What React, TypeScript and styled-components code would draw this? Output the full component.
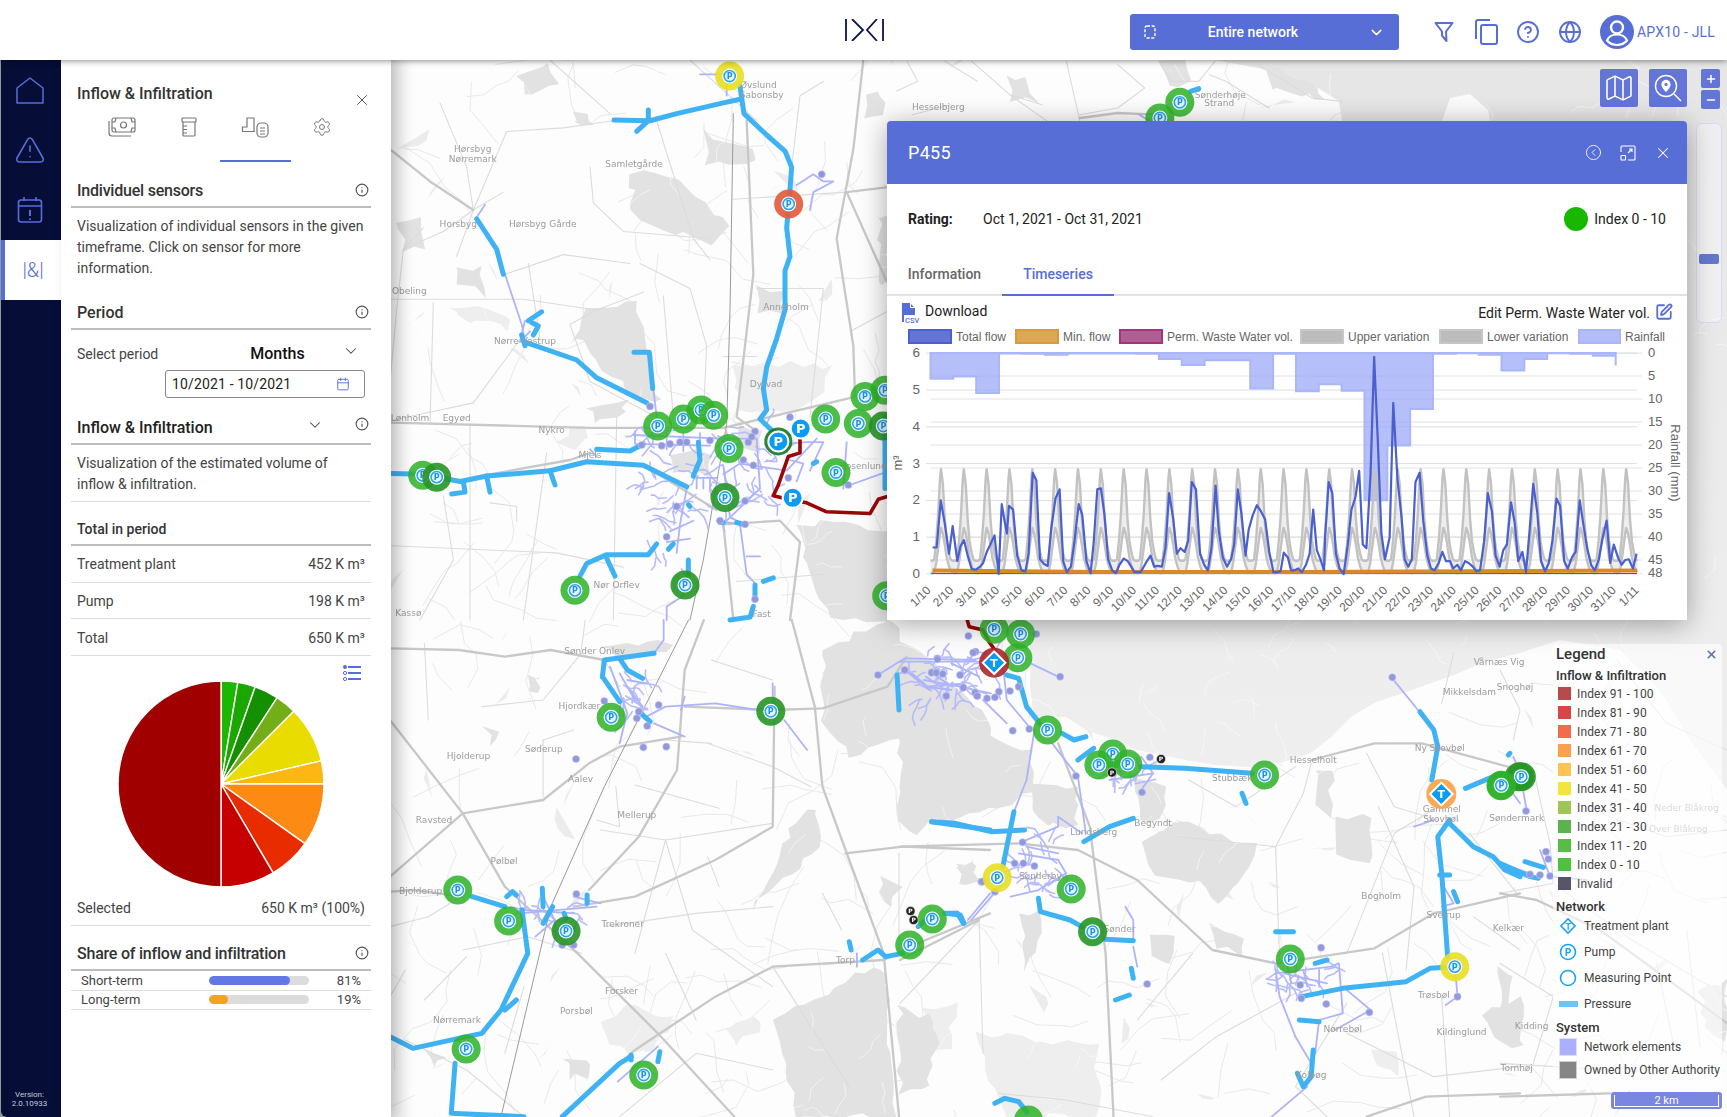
import styled, { createGlobalStyle } from "styled-components";
import {
  X,
  ChevronDown,
  Info,
  Calendar,
  Settings,
  CircleHelp,
  Globe,
  TriangleAlert,
  CircleChevronLeft,
  SquarePen,
  Map as MapIcon,
  Plus,
  Minus,
} from "lucide-react";

const BLUE = "#586ed7";

const GlobalStyle = createGlobalStyle`
  html, body {
    margin: 0;
    padding: 0;
    background: #fff;
    font-family: Roboto, "Liberation Sans", sans-serif;
    overflow: hidden;
  }
  * { box-sizing: border-box; }
`;

const Root = styled.div`
  width: 1727px;
  height: 1117px;
  padding-left: 1px;
  background: #8f9a92;
  display: flex;
  flex-direction: column;
  overflow: hidden;
`;

/* ---------- header ---------- */

const Header = styled.header`
  height: 60px;
  flex: none;
  margin-left: -1px;
  padding-top: 4px;
  background: #fff;
  display: flex;
  align-items: center;
  box-shadow: 0 1px 6px rgba(0, 0, 0, 0.45);
  position: relative;
  z-index: 5;
`;

const Logo = styled.svg`
  width: 40px;
  height: 22px;
  margin-left: 845px;
  margin-top: -5px;
  stroke: #0b1647;
  stroke-width: 1.8;
  fill: none;
`;

const NetworkSelect = styled.div`
  width: 269px;
  height: 36px;
  margin-left: 245px;
  border-radius: 3px;
  background: ${BLUE};
  color: #fff;
  display: flex;
  align-items: center;
  padding: 0 14px;
  font-size: 14px;
  font-weight: 500;
`;

const SelectLabel = styled.span`
  flex: 1;
  text-align: center;
  padding-right: 18px;
`;

const HeaderIcons = styled.div`
  display: flex;
  align-items: center;
  gap: 18px;
  margin-left: 33px;
  color: ${BLUE};
`;

const HeaderIcon = styled.div`
  width: 24px;
  display: flex;
  justify-content: center;
`;

const UserIcon = styled.svg`
  width: 34px;
  height: 34px;
  flex: none;
`;

const UserName = styled.span`
  font-size: 14px;
  color: ${BLUE};
  margin-left: -15px;
  letter-spacing: 0.2px;
`;

/* ---------- body ---------- */

const Body = styled.div`
  flex: 1;
  min-height: 0;
  display: flex;
`;

const Sidebar = styled.nav`
  width: 60px;
  flex: none;
  background: #060e38;
  border-bottom-left-radius: 6px;
  display: flex;
  flex-direction: column;
`;

const NavItem = styled.div<{ $active?: boolean }>`
  height: 60px;
  display: flex;
  align-items: center;
  justify-content: center;
  color: ${BLUE};
  background: ${(p) => (p.$active ? "#fff" : "transparent")};
  border-left: ${(p) => (p.$active ? `4px solid ${BLUE}` : "none")};
  font-size: 20px;
  font-weight: 300;
  padding-right: ${(p) => (p.$active ? "0" : "3px")};
`;

const Version = styled.div`
  margin-top: auto;
  padding-bottom: 9px;
  padding-right: 3px;
  text-align: center;
  font-size: 8px;
  line-height: 9px;
  color: #c4c8d8;
`;

const Panel = styled.aside`
  width: 330px;
  flex: none;
  background: #fff;
  padding: 0 20px 0 10px;
  position: relative;
  z-index: 3;
  box-shadow: 5px 0 12px rgba(0, 0, 0, 0.14);
  color: #444;
`;

const TitleRow = styled.div`
  margin-top: 23px;
  height: 20px;
  padding-left: 6px;
  display: flex;
  justify-content: space-between;
  align-items: center;
  font-size: 16px;
  font-weight: 500;
  color: #333;
`;

const CloseBtn = styled.div`
  display: flex;
  margin: 14px 0 0;
  color: #555;
`;

const PanelTabs = styled.div`
  height: 59px;
  margin-left: 18px;
  display: grid;
  grid-template-columns: repeat(4, 66.5px);
`;

const PanelTab = styled.div<{ $active?: boolean }>`
  display: flex;
  justify-content: center;
  padding-top: 14px;
  color: #777;
  margin: 0 -2px;
  border-bottom: 2px solid ${(p) => (p.$active ? BLUE : "transparent")};
`;

const SectionHead = styled.div<{ $mt: number; $small?: boolean; $dark?: boolean; $tight?: boolean }>`
  height: 33px;
  margin-top: ${(p) => p.$mt}px;
  padding: 0 2px 0 6px;
  border-bottom: 2px solid #bdbdbd;
  display: flex;
  align-items: center;
  font-size: ${(p) => (p.$small ? 14 : 16)}px;
  font-weight: 500;
  letter-spacing: ${(p) => (p.$tight ? "-0.22px" : "0")};
  color: ${(p) => (p.$dark ? "#222" : "#333")};
`;

const HeadText = styled.span`
  flex: 1;
`;

const InfoIcon = styled(Info)`
  width: 14px;
  height: 14px;
  color: #555;
  margin-top: -1px;
`;

const RaisedInfoIcon = styled(InfoIcon)`
  margin-top: -7px;
`;

const HeadChevron = styled(ChevronDown)`
  width: 18px;
  height: 18px;
  color: #444;
  margin: -6px 31px 0 0;
`;

const SelectChevron = styled(ChevronDown)`
  width: 18px;
  height: 18px;
  color: #444;
  margin: -6px 0 0 6px;
`;

const Paragraph = styled.p<{ $rule?: boolean }>`
  margin: 0;
  padding: 8px ${(p) => (p.$rule ? 20 : 0)}px ${(p) => (p.$rule ? 6 : 0)}px 6px;
  font-size: 14px;
  line-height: 21px;
  color: #444;
  border-bottom: ${(p) => (p.$rule ? "1px solid #ddd" : "none")};
`;

const SelectRow = styled.div`
  height: 32px;
  margin-top: 8px;
  padding-left: 6px;
  display: flex;
  align-items: center;
  font-size: 14px;
`;

const SelectValue = styled.span`
  margin: -2px 0 0 92px;
  font-size: 16px;
  font-weight: 500;
  color: #111;
  width: 86px;
`;

const DateField = styled.div`
  width: 200px;
  height: 28px;
  margin-left: 94px;
  padding: 0 14px 0 6px;
  border: 1px solid #888;
  border-radius: 3px;
  display: flex;
  align-items: center;
  justify-content: space-between;
  font-size: 14px;
  color: #222;
  letter-spacing: 0.15px;
`;

const StatRow = styled.div`
  height: 36.7px;
  padding: 1px 6px 0;
  border-bottom: 1px solid #ddd;
  display: flex;
  align-items: center;
  justify-content: space-between;
  font-size: 14px;
`;

const ListRow = styled.div`
  height: 25px;
  padding: 9px 10px 0 0;
  display: flex;
  justify-content: flex-end;
`;

const PieSvg = styled.svg`
  display: block;
  width: 300px;
  height: 206px;
`;

const SelectedRow = styled(StatRow)`
  height: 39px;
  padding-top: 4px;
`;

const ShareRow = styled.div`
  height: 19.5px;
  padding: 0 10px;
  border-bottom: 1px solid #ddd;
  display: grid;
  grid-template-columns: 128px 100px 1fr;
  align-items: center;
  font-size: 13px;
  color: #444;
`;

const ShareTrack = styled.div`
  height: 9px;
  border-radius: 5px;
  background: #dcdcdc;
  overflow: hidden;
`;

const ShareFill = styled.div<{ $color: string }>`
  height: 100%;
  border-radius: 5px;
  background: ${(p) => p.$color};
`;

const SharePct = styled.span`
  text-align: right;
`;

/* ---------- map area ---------- */

const MapArea = styled.main`
  flex: 1;
  position: relative;
  overflow: hidden;
  background: #fff;
`;

const MapSvg = styled.svg`
  position: absolute;
  inset: 0;
  width: 100%;
  height: 100%;
  font-family: "DejaVu Sans", sans-serif;
  filter: blur(0.45px);
`;

const MapTools = styled.div`
  position: absolute;
  top: 9px;
  right: 7px;
  display: flex;
  gap: 11px;
`;

const MapBtn = styled.div`
  width: 38px;
  height: 38px;
  border-radius: 2px;
  background: #6376d8;
  color: #fff;
  display: flex;
  align-items: center;
  justify-content: center;
`;

const ZoomCol = styled.div`
  margin-left: 3px;
  display: flex;
  flex-direction: column;
  gap: 2px;
`;

const ZoomBtn = styled.div`
  width: 19px;
  height: 19px;
  border-radius: 2px;
  background: #6376d8;
  color: #fff;
  display: flex;
  align-items: center;
  justify-content: center;
`;

const Slider = styled.div`
  position: absolute;
  left: 1305px;
  top: 63px;
  width: 26px;
  height: 200px;
  border: 1px solid #d9d9ee;
  border-radius: 6px;
  background: rgba(255, 255, 255, 0.35);
`;

const SliderKnob = styled.div`
  position: absolute;
  left: 2px;
  top: 130px;
  width: 20px;
  height: 10px;
  border-radius: 2px;
  background: #6478cc;
`;

/* ---------- popup ---------- */

const Popup = styled.section`
  position: absolute;
  left: 496px;
  top: 61px;
  width: 800px;
  height: 499px;
  background: #fff;
  border-radius: 4px 4px 0 0;
  box-shadow: 0 4px 28px rgba(0, 0, 0, 0.35);
  display: flex;
  flex-direction: column;
`;

const PopupHead = styled.div`
  height: 63px;
  flex: none;
  padding: 0 15px 0 21px;
  background: ${BLUE};
  border-radius: 4px 4px 0 0;
  display: flex;
  align-items: center;
  gap: 18px;
  color: #fff;
`;

const PopupTitle = styled.span`
  flex: 1;
  font-size: 18px;
  letter-spacing: 0.3px;
`;

const RatingRow = styled.div`
  height: 70px;
  flex: none;
  padding: 0 21px;
  display: flex;
  align-items: center;
  font-size: 14px;
  color: #222;
`;

const RatingLabel = styled.b`
  width: 75px;
  font-weight: 700;
`;

const RatingDot = styled.span`
  width: 24px;
  height: 24px;
  border-radius: 50%;
  background: #18b800;
  margin-left: auto;
  margin-right: 6px;
`;

const PopupTabs = styled.div`
  height: 42px;
  flex: none;
  border-bottom: 2px solid #e2e2e2;
  display: flex;
`;

const PopupTab = styled.div<{ $active?: boolean }>`
  min-width: 112px;
  width: ${(p) => (p.$active ? 112 : 115)}px;
  padding: 0 20px;
  margin-bottom: -2px;
  display: flex;
  align-items: center;
  justify-content: center;
  font-size: 14px;
  font-weight: 500;
  color: ${(p) => (p.$active ? BLUE : "#666")};
  border-bottom: 2px solid ${(p) => (p.$active ? BLUE : "transparent")};
`;

const ChartBar = styled.div`
  height: 30px;
  flex: none;
  padding: 7px 14px 0 14px;
  display: flex;
  justify-content: space-between;
  font-size: 14px;
  color: #222;
`;

const BarAction = styled.div`
  display: flex;
  align-items: flex-start;
  gap: 5px;
`;

const EditLabel = styled.span`
  padding-top: 2px;
`;

const ChartSvg = styled.svg`
  display: block;
  width: 800px;
  height: 294px;
  font-family: "Liberation Sans", Arial, sans-serif;
`;

/* ---------- legend ---------- */

const Legend = styled.div`
  position: absolute;
  left: 1162px;
  top: 584px;
  width: 169px;
  height: 446px;
  padding: 0 0 0 3px;
  border-radius: 4px;
  background: rgba(255, 255, 255, 0.62);
  font-size: 12px;
  white-space: nowrap;
  color: #444;
`;

const LegendTitle = styled.div`
  height: 20px;
  display: flex;
  justify-content: space-between;
  align-items: center;
  font-size: 15px;
  font-weight: 500;
  color: #333;
`;

const LegendClose = styled.span`
  color: #5a70a8;
  display: flex;
  margin-right: 4px;
`;

const LegendGroup = styled.div<{ $mt: number; $mb?: number }>`
  height: 16px;
  line-height: 16px;
  margin-top: ${(p) => p.$mt}px;
  margin-bottom: ${(p) => p.$mb || 0}px;
  font-size: 13px;
  font-weight: 500;
  color: #333;
`;

const IndexRow = styled.div`
  height: 19px;
  display: flex;
  align-items: center;
  gap: 6px;
  padding-left: 2px;
  letter-spacing: 0.12px;
`;

const IndexSwatch = styled.span<{ $color: string }>`
  width: 13px;
  height: 13px;
  background: ${(p) => p.$color};
`;

const NetRow = styled.div<{ $h: number }>`
  height: ${(p) => p.$h}px;
  display: flex;
  align-items: center;
  gap: 7px;
  padding-left: 3px;
`;

const NetIcon = styled.svg`
  width: 18px;
  height: 18px;
  flex: none;
`;

const PressureLine = styled.span`
  width: 19px;
  height: 6px;
  margin-right: -1px;
  background: #6cc5f7;
  flex: none;
`;

const SystemSwatch = styled.span<{ $color: string }>`
  width: 18px;
  height: 18px;
  flex: none;
  background: ${(p) => p.$color};
  border: 1px solid rgba(255, 255, 255, 0.6);
`;

const ScaleBar = styled.div`
  position: absolute;
  left: 1220px;
  top: 1032px;
  width: 111px;
  height: 17px;
  padding: 3px 3px 2px;
  border-radius: 3px;
  background: #7a86e0;
  display: flex;
`;

const ScaleInner = styled.div`
  flex: 1;
  border: 1px solid #fff;
  border-top: none;
  color: #fff;
  font-size: 11px;
  line-height: 11px;
  text-align: center;
`;

/* ---------- map data: coordinates as read off crops, each with its own offset and scale ---------- */

type Zoom = [number, number, number, number];
const project = (z: Zoom, x: number, y: number): [number, number] => [z[0] + x / z[2], z[1] + y / z[3]];
const toPoints = (z: Zoom, s: string) =>
  s
    .split(" ")
    .map((p) => {
      const [x, y] = p.split(",").map(Number);
      return project(z, x, y).join(",");
    })
    .join(" ");

const makeRandom = (start: number) => {
  let seed = start;
  return () => {
    seed = (seed * 16807) % 2147483647;
    return seed / 2147483647;
  };
};

// land outlines are only rough readings, so break the straight edges up a little
const roughen = (z: Zoom, s: string, seedNo: number) => {
  const rand = makeRandom(seedNo * 97 + 11);
  const pts = s.split(" ").map((p) => {
    const [x, y] = p.split(",").map(Number);
    return project(z, x, y);
  });
  const out: string[] = [];
  pts.forEach((a, i) => {
    const b = pts[(i + 1) % pts.length];
    const len = Math.hypot(b[0] - a[0], b[1] - a[1]);
    const steps = Math.max(2, Math.round(len / 11));
    for (let k = 0; k < steps; k++) {
      const t = k / steps;
      out.push(`${a[0] + (b[0] - a[0]) * t + (rand() - 0.5) * 8},${a[1] + (b[1] - a[1]) * t + (rand() - 0.5) * 8}`);
    }
  });
  return out.join(" ");
};

const wander = (count: number, seedNo: number, box: number[], step: number) => {
  const rand = makeRandom(seedNo);
  return Array.from({ length: count }, () => {
    let x = box[0] + rand() * (box[2] - box[0]);
    let y = box[1] + rand() * (box[3] - box[1]);
    let dir = rand() * Math.PI * 2;
    const pts = [`${x},${y}`];
    const n = 2 + Math.floor(rand() * 3);
    for (let i = 0; i < n; i++) {
      const len = step * (0.5 + rand());
      x += Math.cos(dir) * len;
      y += Math.sin(dir) * len;
      dir += (rand() - 0.5) * 1.6;
      pts.push(`${x},${y}`);
    }
    return pts.join(" ");
  });
};

const fineRoads = wander(420, 4211, [391, 60, 1727, 1117], 20);
const fineField = wander(90, 733, [391, 60, 1727, 1117], 9);
const landGrain = wander(520, 9127, [391, 60, 1727, 1117], 10);
const townBoxes = [
  [640, 425, 790, 510, 70],
  [915, 655, 1000, 700, 45],
  [1018, 840, 1066, 897, 26],
  [1110, 767, 1157, 783, 14],
  [1275, 967, 1339, 993, 22],
  [520, 907, 581, 920, 14],
  [620, 670, 650, 727, 16],
  [655, 505, 690, 570, 14],
];
const townStreets = townBoxes.flatMap((b, i) => wander(b[4], 3001 + i * 37, b, 6));

type Region = {
  z: Zoom;
  land?: string[];
  soft?: string[];
  minor?: string[];
  major?: string[];
  rail?: string[];
  net?: string[];
  blue?: string[];
  red?: string[];
  dots?: number[][];
  markers?: [number, number, string][];
  labels?: [string, number, number][];
};

const regions: Region[] = [
  {
    z: [390, 60, 3, 2.8],
    land: [
      "390,40 480,20 500,60 400,100",
      "730,320 860,320 960,430 1030,470 960,510 850,480 720,430",
      "560,150 600,150 600,180 560,180",
      "950,200 1090,260 1090,290 950,290",
      "30,450 90,450 100,520 40,530",
      "210,580 280,580 280,660 210,620",
      "600,700 740,680 770,780 790,900 820,960 720,930 570,790 550,790",
      "1110,640 1180,640 1180,700 1110,700",
      "850,1100 960,1100 960,1160 850,1160",
      "1230,1300 1340,1290 1500,1330 1500,1568 1330,1568 1260,1450",
      "600,980 710,950 700,980 610,1010",
      "1060,1030 1120,1030 1100,1100 1040,1090",
      "1440,90 1480,90 1470,160 1430,160",
      "1470,430 1490,440 1490,640 1465,620",
    ],
    soft: ["1040,860 1170,850 1330,860 1300,930 1180,990 1050,980", "550,1020 600,1050 560,1090 500,1080", "190,690 340,710 360,750 200,720"],
    minor: [
      "250,420 350,200 520,190 670,170",
      "250,420 160,480 40,530 20,700 0,900",
      "0,670 400,670 620,700 760,650",
      "40,530 100,470",
      "345,600 520,545 720,570",
      "400,770 250,960 0,1010",
      "750,570 900,640 950,800 940,1000",
      "620,700 540,740 600,900 800,1000",
      "850,1000 820,660",
      "1100,830 1000,830",
      "800,170 910,500 960,560",
      "1030,390 1370,370",
      "480,0 660,150",
      "900,0 1100,170",
      "1200,340 1230,100 1300,60",
      "600,300 610,400 700,480 960,500",
      "150,120 230,300 250,420",
      "250,420 340,370",
      "250,420 200,550",
      "130,680 120,1020",
      "415,570 450,780",
      "240,1020 240,1568",
      "470,1100 400,1568",
      "160,1220 190,1400 90,1568",
      "680,1000 670,1568",
      "0,1360 500,1380 700,1420",
      "300,1240 380,1250 380,1290",
      "1100,640 1300,640 1260,1000",
      "1500,700 1380,760",
      "1040,1460 1300,1440",
    ],
    major: [
      "0,250 120,340 250,420",
      "0,1015 600,1030 1000,1030 1500,920",
      "1420,0 1390,250 1340,500 1390,800 1395,940",
      "1070,170 1090,600 1040,1000 1100,1040",
      "1000,1300 1170,1290 1230,1350 1200,1568",
      "1370,370 1490,620",
      "1370,370 1500,355",
      "600,1100 540,1120 300,1160",
      "1030,1568 1000,1300",
      "760,1135 980,1260",
    ],
    rail: ["1030,150 1020,700 1010,1020 940,1400 900,1568"],
    net: [
      "345,600 395,740 405,790",
      "730,1050 1000,1060 1100,1060",
      "790,920 800,1000",
      "1280,1060 1190,1150 1050,1130 1000,1160",
      "735,1040 735,1075 960,1080",
      "830,1045 830,1090",
      "880,1045 880,1095",
      "930,1045 930,1095",
      "1000,1135 1020,1280 1060,1300",
      "1050,1300 1070,1440 1100,1470",
      "1100,1060 1110,1200 1010,1290",
      "1130,1080 1250,1070 1300,1070 1260,1150",
      "1200,1120 1240,1130 1220,1180",
      "1370,1070 1360,1200",
      "1380,1190 1500,1150",
      "920,1170 980,1170",
      "920,1170 920,1200",
      "940,1170 940,1200",
      "960,1170 960,1200",
      "890,1200 870,1300 860,1380",
      "840,1320 910,1290",
      "830,1350 900,1340",
      "895,1400 880,1500 830,1530 830,1568",
      "1220,350 1270,320 1300,340 1330,340 1270,370 1260,420",
      "405,730 390,790 420,760",
      "260,440 285,405",
      "930,40 1010,40 1010,100",
      "600,1090 620,1110",
      "980,1290 1050,1300",
      "1070,1390 1110,1390",
    ],
    blue: [
      "1050,75 1062,150 1130,210 1185,255 1205,300 1197,400 1190,470 1200,550 1185,590 1185,700 1160,780 1130,860 1120,920 1130,980 1110,1005 1160,1050",
      "672,168 780,170 860,150 1000,120 1050,110",
      "775,140 775,170 740,200",
      "260,445 320,530 340,600",
      "405,790 560,840 620,890 770,960",
      "395,770 405,800",
      "415,730 455,705",
      "425,735 445,745 430,770",
      "732,818 778,818 788,920",
      "620,1090 720,1095 760,1075",
      "0,1158 100,1160 210,1180 290,1165 480,1150 590,1125 760,1135 890,1195",
      "290,1165 300,1210",
      "480,1150 495,1190",
      "185,1215 225,1210 220,1180",
      "925,1070 930,1120 910,1165",
      "570,1445 590,1410 650,1385 775,1385 800,1355",
      "650,1395 675,1445",
      "850,1355 835,1370",
      "895,1400 895,1440",
      "1095,1470 1095,1510",
      "1120,1460 1150,1450",
      "1090,1530 1080,1560 1020,1568",
      "1485,1000 1485,1200",
      "990,1295 1000,1295",
      "1040,1295 1060,1300",
      "1270,1130 1280,1125",
      "895,1245 900,1250",
    ],
    red: ["1230,1060 1230,1100 1195,1110 1165,1190 1150,1220 1195,1230 1250,1240 1310,1265 1440,1270 1465,1230 1500,1220"],
    dots: [
      [780, 970], [815, 1080], [840, 1075], [870, 1070], [890, 1070], [960, 1065], [1090, 1135], [1060, 1120],
      [1195, 1170], [1200, 1000], [1095, 1040], [1295, 320], [1375, 1190], [860, 1250], [830, 1335], [1095, 1510],
      [755, 1078], [1075, 1070], [1085, 1055], [990, 1290], [1065, 1300], [1065, 1235],
    ],
    markers: [
      [1019, 45, "y"], [1196, 403, "r"], [803, 1025, "g"], [880, 1005, "g"], [933, 980, "g"], [971, 995, "g"],
      [1017, 1088, "g"], [1005, 1225, "d"], [98, 1163, "g"], [140, 1168, "d"], [1307, 1005, "g"], [1425, 942, "g"],
      [1485, 925, "g"], [1405, 1018, "g"], [1480, 1025, "d"], [1338, 1155, "g"], [555, 1485, "g"], [885, 1470, "d"],
      [1490, 1500, "g"], [1165, 1068, "x"], [1232, 1032, "b"], [1208, 1226, "b"],
    ],
    labels: [
      ["Hørsbyg", 248, 248], ["Nørremark", 248, 277], ["Samletgårde", 732, 292], ["Horsbyg", 205, 458],
      ["Hørsbyg Gårde", 458, 458], ["Obeling", 58, 647], ["Nørre Vestrup", 405, 787], ["Anneholm", 1188, 692],
      ["Dyrvad", 1128, 907], ["Lønholm", 60, 1002], ["Egyød", 200, 1002], ["Nykro", 485, 1037], ["Mjels", 600, 1105],
      ["Øvslund", 1105, 70], ["Sabonsby", 1115, 97], ["Rosenlund", 1420, 1137], ["Nør Orflev", 680, 1470],
      ["Kassø", 55, 1548], ["Fast", 1115, 1550],
    ],
  },
  {
    z: [390, 620, 2.613, 3],
    land: [
      "1140,80 1300,10 1568,300 1568,480 1380,640 1330,610 1340,350 1200,410 1130,300",
      "1050,620 1110,560 1130,680 1000,800 940,860 1000,760",
      "1010,1200 1220,1060 1290,1040 1320,1490 1060,1490",
      "1340,1200 1400,1180 1440,1250 1400,1360 1340,1340",
      "1490,730 1530,730 1530,790 1490,790",
      "460,1310 520,1310 510,1370 460,1370",
      "100,1290 140,1320 110,1340",
      "370,170 390,170 390,210 370,210",
      "250,330 290,330 260,370",
      "1290,760 1330,790 1310,860 1280,820",
      "560,80 730,70 700,100 600,110",
    ],
    soft: ["560,1200 640,1150 740,1200 680,1300 570,1280", "890,1230 960,1190 960,1240 900,1280", "1400,1170 1480,1150 1460,1280 1400,1300"],
    minor: [
      "0,920 100,890 200,820",
      "190,990 360,950 500,1000",
      "640,1000 720,660",
      "720,660 790,930 1000,1100",
      "640,495 860,565",
      "400,530 400,360",
      "550,630 720,660 1000,610",
      "830,370 1000,440 1100,500",
      "720,1000 800,1200",
      "0,1130 40,1050",
      "40,1260 200,1350 350,1490",
      "350,1100 300,1300",
      "600,1490 800,1300 1000,1350",
      "1330,700 1330,1000",
      "200,1010 90,1140",
      "90,70 100,300",
      "240,260 400,240 500,100",
      "400,360 480,330",
      "510,0 500,90",
      "840,120 1000,180",
      "600,200 560,120",
      "830,710 860,800",
      "1000,1040 1200,1400",
      "560,920 800,880 1000,860",
      "720,360 840,370",
      "540,600 600,620 590,500",
      "1130,820 1180,930",
    ],
    major: [
      "0,300 190,580 300,800 490,1000 700,1240 900,1490",
      "0,85 180,90 300,110 420,90 560,120",
      "0,770 190,580 400,540 520,430 600,380 760,350",
      "820,0 770,150 750,450 650,650 520,810",
      "1190,700 1340,680 1568,690",
      "190,830 60,810 0,815",
      "1568,880 1400,960 1290,1020 1000,1040 850,1130 640,1290 590,1340",
      "1005,200 1000,620 850,720 640,830 480,860",
      "770,260 1000,270 1130,265 1300,200 1350,110",
      "1050,0 1110,260 1130,500 1200,720 1290,1000 1330,1490",
    ],
    rail: ["780,0 560,500 420,860 290,1490"],
    net: [
      "690,100 715,60 715,0",
      "575,140 620,280 600,370",
      "670,290 720,260 850,250 960,270",
      "690,310 770,350",
      "770,230 760,270",
      "1000,190 1000,250",
      "1030,300 1090,390",
      "620,180 670,190",
      "340,880 540,860",
      "350,870 480,880",
      "400,830 430,900 380,950",
      "480,830 550,850",
      "1510,900 1568,820",
      "595,1385 700,1280",
      "1220,1000 1220,1040",
      "1275,165 1345,115 1530,120",
      "1345,150 1400,200 1500,190",
      "1370,170 1410,210",
      "1400,170 1440,200",
      "1430,170 1470,200",
      "600,160 640,240",
      "620,200 660,260",
      "430,920 470,980",
    ],
    blue: [
      "555,170 600,245",
      "555,170 560,120 690,100",
      "600,115 620,150 660,175",
      "660,285 680,305",
      "215,830 300,860",
      "345,870 360,1000 290,1170 240,1240 200,1250 60,1285 0,1250",
      "300,1170 330,1140",
      "305,830 320,815 330,825",
      "398,805 400,860",
      "425,860 400,910",
      "515,825 515,850",
      "455,880 460,895",
      "170,1330 160,1480 350,1490",
      "450,1490 600,1330 630,1310",
      "630,1305 630,1320",
      "705,1295 700,1325",
      "1325,165 1330,270",
      "1200,965 1205,990",
      "1235,1020 1275,990 1295,1010 1340,1000",
      "1380,920 1400,900",
      "1415,605 1568,630",
      "1450,880 1490,885 1500,910",
    ],
    dots: [
      [486, 417], [662, 382], [722, 380], [645, 295], [672, 318], [702, 255], [560, 243], [650, 275], [1275, 165],
      [1345, 150], [1415, 157], [1430, 115], [1490, 165], [1498, 202], [1453, 228], [1530, 95], [1535, 228],
      [487, 822], [1545, 785], [450, 975], [480, 975],
    ],
    markers: [
      [578, 292, "g"], [995, 274, "d"], [177, 810, "g"], [310, 903, "g"], [460, 933, "d"], [1417, 897, "g"],
      [1358, 975, "g"], [199, 1287, "g"], [663, 1365, "g"],
    ],
    labels: [
      ["Sønder Onlev", 535, 92], ["Søderup", 402, 386], ["Hjolderup", 205, 407], ["Aalev", 498, 478],
      ["Mellerup", 645, 585], ["Ravsted", 115, 600], ["Pølbøl", 298, 722], ["Bjolderup", 80, 812],
      ["Trekroner", 608, 912], ["Forsker", 605, 1112], ["Nørremark", 175, 1200], ["Porsbøl", 487, 1173],
      ["Torp", 1190, 1020], ["Hjordkær", 495, 257],
    ],
  },
  {
    z: [900, 620, 2.529, 3],
    land: [
      "0,330 200,330 330,400 330,520 250,560 120,600 0,600",
      "340,480 450,500 450,620 340,600",
      "620,660 700,600 790,640 900,680 860,780 800,850 760,780 640,770",
      "1110,590 1190,590 1190,730 1110,700",
      "600,480 680,500 660,600 600,600",
      "1060,440 1100,450 1080,590 1060,580",
      "0,1150 60,1200 80,1400 0,1420",
      "310,880 350,880 350,1000 320,1050",
      "640,950 700,950 680,1030 640,1010",
      "790,920 860,950 860,1000 800,980",
      "1480,1180 1568,1130 1568,1280 1500,1260",
      "150,730 190,730 190,780 150,780",
    ],
    soft: ["200,1240 500,1280 500,1490 270,1490 210,1320", "1200,1300 1260,1290 1260,1360 1200,1350"],
    minor: [
      "950,680 1020,520 1040,430",
      "950,680 960,1020",
      "1130,1150 1000,1400 1080,1490",
      "1130,1240 1350,1370 1568,1340",
      "1360,560 1250,640 1130,1000",
      "1370,1130 1390,1490",
      "1180,400 1250,560 1360,600",
      "0,1150 200,900 210,1300",
      "660,1380 800,1250 1000,1120",
      "250,1420 420,1440 640,1490",
      "730,480 850,560 1000,440",
      "1210,560 1300,800 1280,1050",
      "1440,640 1560,820",
      "1370,250 1400,100",
      "1220,1000 1300,1490",
      "600,1200 740,1000",
      "700,650 950,680",
      "1450,890 1568,990",
    ],
    major: [
      "0,680 300,670 450,690 600,780 790,990 950,1030 1200,985 1350,880 1568,820",
      "400,370 480,620 520,1000 540,1490",
      "1040,420 1200,370 1320,370 1568,450",
      "200,900 0,1020",
      "1180,1490 1330,1430 1568,1420",
    ],
    net: [
      "0,125 90,125 190,125 260,130 270,240 330,325",
      "60,180 150,200 230,220",
      "30,160 70,200 130,210",
      "210,240 270,310",
      "340,330 320,480 290,570",
      "260,790 180,900",
      "310,665 400,620 400,590 460,640",
      "300,700 400,720 420,760 350,810 280,830",
      "320,680 400,700",
      "385,370 450,470 470,640",
      "530,480 640,460",
      "610,410 640,460 610,510",
      "590,980 600,1040",
      "570,860 590,900 590,960",
      "1245,175 1310,270",
      "1370,790 1400,850 1370,860",
      "1405,1060 1410,1130 1380,1155",
      "950,1050 960,1130 1000,1250",
      "950,1060 1090,1040 1110,1030 1120,1180 1060,1200 1050,1300",
      "1000,1250 1040,1330",
      "1030,1400 940,1490",
      "1120,1100 1190,1170 1100,1230",
      "1520,470 1568,550",
      "970,1060 1080,1090",
      "980,1040 990,1090",
      "1020,1050 1030,1100",
      "1060,1050 1060,1100",
      "330,130 400,170",
      "1350,600 1300,620",
      "200,170 130,130",
    ],
    blue: [
      "270,165 300,175 320,260 360,320",
      "410,340 440,360 470,350",
      "450,420 490,385",
      "610,440 720,445 890,460",
      "865,520 875,550",
      "1315,275 1350,330 1360,380 1345,480",
      "1430,505 1520,460",
      "1390,600 1360,650 1370,760 1385,1010",
      "1390,610 1450,680 1500,710 1530,750 1568,770",
      "1365,765 1390,765",
      "1400,815 1410,845",
      "288,575 260,740",
      "80,605 140,610 230,635 315,630",
      "350,835 355,875 430,900 460,920",
      "520,958 590,962",
      "585,1045 590,1075",
      "545,1140 580,1125",
      "465,665 530,620 590,595",
      "950,935 995,935",
      "1050,1030 1080,1020",
      "1015,1130 1120,1105 1280,1085 1340,1045 1400,1040",
      "1010,1200 1060,1205",
      "1045,1290 1040,1370 1020,1400 1005,1360",
      "240,1450 265,1435 300,1445 320,1475",
      "120,880 145,880 160,910",
    ],
    red: ["170,0 175,20 210,30 225,65 240,90"],
    dots: [
      [12, 150], [80, 158], [92, 158], [108, 162], [95, 118], [152, 165], [160, 203], [117, 228], [190, 218],
      [195, 228], [220, 235], [240, 232], [250, 215], [278, 213], [300, 200], [285, 332], [327, 327], [405, 170],
      [445, 468], [612, 517], [632, 412], [310, 667], [290, 730], [312, 730], [340, 738], [208, 785], [240, 815],
      [625, 1092], [1065, 983], [1012, 1095], [1078, 1152], [1187, 1177], [1245, 172], [1410, 1130], [185, 98],
      [173, 48], [345, 42], [1015, 1135],
    ],
    markers: [
      [238, 28, "g"], [305, 42, "g"], [298, 113, "g"], [373, 330, "g"], [538, 402, "g"], [503, 435, "g"], [576, 432, "g"],
      [922, 465, "g"], [433, 807, "g"], [487, 935, "d"], [987, 1017, "g"], [1520, 497, "g"], [1566, 470, "d"],
      [246, 773, "y"], [1403, 1040, "y"], [238, 128, "T"], [1369, 522, "O"], [325, 1500, "g"],
    ],
    labels: [
      ["Hesselholt", 1045, 420], ["Begyndt", 640, 610], ["Lundsberg", 490, 635], ["Bogholm", 1217, 828],
      ["Trøsbøl", 1350, 1125], ["Kildinglund", 1420, 1237], ["Nørrebøl", 1120, 1228], ["Kolbøg", 1040, 1365],
      ["Ny Skovbøl", 1365, 385], ["Gammel", 1370, 567], ["Skovbøl", 1368, 597], ["Vårnæs Vig", 1515, 127],
      ["Mikkelsdam", 1440, 215], ["Svejrup", 1375, 885], ["Sønder", 555, 928], ["Stubbæk", 840, 475], ["Sønderby", 355, 768],
    ],
  },
  {
    z: [880, 58, 1.851, 3],
    land: ["520,10 560,10 570,80 530,80", "240,60 270,60 290,130 240,120", "720,20 790,70 830,130 720,90"],
    minor: [
      "50,10 70,70 30,100",
      "170,10 240,110 310,190",
      "345,10 370,190",
      "240,110 300,140",
      "440,20 490,90 440,150 370,170",
      "520,20 540,70 590,70 620,10",
      "610,50 640,70 720,150",
      "700,20 800,120 855,130",
      "120,10 180,70",
      "60,170 130,140",
    ],
    major: ["370,180 440,165 510,170"],
    net: ["480,170 500,190"],
    blue: ["575,100 590,92"],
    markers: [[555, 133, "g"], [518, 180, "g"]],
    labels: [["Hesselbjerg", 108, 148], ["Sønderhøje", 630, 110], ["Strand", 628, 135]],
  },
  {
    z: [1500, 630, 3, 3],
    minor: [
      "0,120 60,240 40,330",
      "100,420 150,640 160,760 0,790",
      "160,760 380,920 681,1100",
      "560,900 600,1250",
      "0,1000 160,1100 100,1300",
      "350,90 500,280 681,360",
      "300,550 500,620 681,600",
      "470,1000 520,1240",
      "0,1300 330,1320",
    ],
    major: ["0,790 110,810 300,900 560,1090 681,1180", "0,1400 330,1390"],
    land: ["600,1080 681,1050 681,1230 620,1200", "0,1010 40,1050 30,1170 0,1170"],
    net: ["40,380 60,430 80,540", "120,660 150,740 260,750", "0,700 90,730"],
    blue: ["0,700 90,740 115,745", "75,695 130,712", "30,370 25,375"],
    dots: [[78, 543], [138, 665], [145, 687], [90, 733], [120, 735], [150, 738]],
    markers: [[64, 440, "d"], [4, 466, "g"]],
    labels: [
      ["Neder Blåkrog", 560, 533], ["Over Blåkrog", 535, 597],
      ["Søndermark", 50, 565], ["Snoghøj", 45, 172], ["Kelkær", 25, 895], ["Kidding", 95, 1188], ["Tornhøj", 50, 1315],
    ],
  },
];

const waterCoast =
  "1215,60 1258,68 1296,78 1318,88 1339,101 1342,121 1342,300 1100,450 1030,620 1030,687 1034,717 1066,717 1086,730 1106,737 1137,750 1161,755 1185,760 1216,765 1248,767 1280,763 1311,753 1331,737 1351,717 1374,703 1406,692 1454,675 1485,662 1520,653 1560,640 1620,650 1660,690 1690,740 1727,790 1727,60";

const ringColor: Record<string, string> = {
  g: "rgba(47,178,40,0.86)",
  d: "rgba(38,150,38,0.9)",
  x: "rgba(24,120,34,0.9)",
  y: "rgba(232,222,40,0.92)",
  r: "rgba(226,92,62,0.92)",
  T: "rgba(170,40,45,0.9)",
  O: "rgba(250,165,75,0.95)",
};

const Marker = ({ x, y, kind }: { x: number; y: number; kind: string }) => {
  if (kind === "b" || kind === "x") {
    return (
      <g>
        {kind === "x" && <circle cx={x} cy={y} r={14} fill={ringColor.x} />}
        <circle cx={x} cy={y} r={10} fill="#0a9bf2" stroke="#fff" strokeWidth={2} />
        <text x={x} y={y + 4.5} fontSize={13} fontWeight={700} fill="#fff" textAnchor="middle">
          P
        </text>
      </g>
    );
  }
  if (kind === "T" || kind === "O") {
    return (
      <g>
        <circle cx={x} cy={y} r={15} fill={ringColor[kind]} />
        <rect x={x - 8} y={y - 8} width={16} height={16} transform={`rotate(45 ${x} ${y})`} fill="#0a9bf2" stroke="#fff" strokeWidth={2} />
        <text x={x} y={y + 4} fontSize={11} fontWeight={700} fill="#fff" textAnchor="middle">
          T
        </text>
      </g>
    );
  }
  // the last one only peeks in at the bottom edge
  if (y > 1110) return <circle cx={x} cy={y} r={14.5} fill={ringColor[kind]} />;
  return (
    <g>
      <circle cx={x} cy={y} r={14.5} fill={ringColor[kind]} />
      <circle cx={x} cy={y} r={7.5} fill="#fff" />
      <circle cx={x} cy={y} r={5.6} fill="#e6f5ff" stroke="#2aa5f2" strokeWidth={1.6} />
      <text x={x} y={y + 3} fontSize={8} fontWeight={700} fill="#1c93e6" textAnchor="middle">
        P
      </text>
    </g>
  );
};

const MapCanvas = () => (
  <MapSvg viewBox="391 60 1336 1057" preserveAspectRatio="none">
    <defs>
      <linearGradient id="water" x1="0" y1="0" x2="0" y2="1">
        <stop offset="0" stopColor="#e6e6e6" />
        <stop offset="1" stopColor="#efefef" />
      </linearGradient>
      <linearGradient id="edge" x1="0" y1="0" x2="1" y2="0">
        <stop offset="0" stopColor="#000" stopOpacity={0.12} />
        <stop offset="1" stopColor="#000" stopOpacity={0} />
      </linearGradient>
    </defs>
    <rect x={391} y={60} width={1336} height={1057} fill="#fdfdfd" />
    <g fill="none" strokeLinecap="round" strokeLinejoin="round">
      {fineRoads.map((s, j) => <polyline key={j} points={s} stroke="#e9e9e9" strokeWidth={1} />)}
    </g>
    {fineField.map((s, j) => <polygon key={j} points={s} fill="#ececec" />)}
    <polygon points={waterCoast} fill="url(#water)" />
    <polygon points="1442,121 1450,98 1470,94 1488,110 1490,121" fill="#fbfbfb" />
    {regions.map((r, i) => (
      <g key={i}>
        {r.soft?.map((s, j) => <polygon key={j} points={roughen(r.z, s, i * 31 + j + 1)} fill="#eeeeee" />)}
        {r.land?.map((s, j) => <polygon key={j} points={roughen(r.z, s, i * 53 + j + 3)} fill="#e2e2e2" />)}
      </g>
    ))}
    <g fill="none" strokeLinecap="round" strokeLinejoin="round" opacity={0.75}>
      {landGrain.map((s, j) => <polyline key={j} points={s} stroke="#fdfdfd" strokeWidth={0.8} />)}
    </g>
    {regions.map((r, i) => (
      <g key={i} fill="none" strokeLinecap="round" strokeLinejoin="round">
        {r.minor?.map((s, j) => <polyline key={j} points={toPoints(r.z, s)} stroke="#dcdcdc" strokeWidth={1.1} />)}
        {r.major?.map((s, j) => <polyline key={j} points={toPoints(r.z, s)} stroke="#c8c8c8" strokeWidth={2.3} />)}
        {r.rail?.map((s, j) => <polyline key={j} points={toPoints(r.z, s)} stroke="#9a9a9a" strokeWidth={1} />)}
      </g>
    ))}
    <g fill="none" strokeLinecap="round" strokeLinejoin="round">
      {townStreets.map((s, j) => <polyline key={j} points={s} stroke="#b6bbfa" strokeWidth={1.6} />)}
    </g>
    {regions.map((r, i) => (
      <g key={i} fill="none" strokeLinecap="round" strokeLinejoin="round">
        {r.net?.map((s, j) => <polyline key={j} points={toPoints(r.z, s)} stroke="#aeb4fb" strokeWidth={1.8} />)}
      </g>
    ))}
    {regions.map((r, i) => (
      <g key={i} fill="none" strokeLinecap="round" strokeLinejoin="round">
        {r.blue?.map((s, j) => <polyline key={j} points={toPoints(r.z, s)} stroke="#3fb2f4" strokeWidth={5} />)}
        {r.red?.map((s, j) => <polyline key={j} points={toPoints(r.z, s)} stroke="#9c0505" strokeWidth={3.6} />)}
      </g>
    ))}
    {regions.map((r, i) => (
      <g key={i}>
        {r.dots?.map(([x, y], j) => {
          const [px, py] = project(r.z, x, y);
          return <circle key={j} cx={px} cy={py} r={3.6} fill="#9198dc" stroke="#c9cdf5" strokeWidth={0.6} />;
        })}
      </g>
    ))}
    {regions.map((r, i) => (
      <g key={i} fontSize={9} fill="#9c9c9c" textAnchor="middle">
        {r.labels?.map(([t, x, y], j) => {
          const [px, py] = project(r.z, x, y);
          return (
            <text key={j} x={px} y={py + 3}>
              {t}
            </text>
          );
        })}
      </g>
    ))}
    {regions.map((r, i) => (
      <g key={i}>
        {r.markers?.map(([x, y, k], j) => {
          const [px, py] = project(r.z, x, y);
          return <Marker key={j} x={px} y={py} kind={k} />;
        })}
      </g>
    ))}
    {[
      [910.5, 911],
      [913.6, 920],
      [1112, 772.5],
      [1161, 759],
    ].map(([x, y], i) => (
      <g key={i}>
        <circle cx={x} cy={y} r={4.6} fill="#222" stroke="#eee" strokeWidth={0.6} />
        <text x={x} y={y + 2.2} fontSize={6} fontWeight={700} fill="#fff" textAnchor="middle">
          P
        </text>
      </g>
    ))}
    <rect x={391} y={60} width={22} height={1057} fill="url(#edge)" />
  </MapSvg>
);

/* ---------- chart ---------- */

const X0 = 930.5;
const DAY = 22.84;
const Y0 = 574;
const UNIT = 36.8;
const RAIN_Y0 = 353;
const RAIN_UNIT = 4.6;

const rainfall = [
  5.6, 5.1, 8.7, 0.1, 0.15, 0.4, 0.1, 0.1, 0.1, 0.15, 1.3, 2.6, 1.6, 1.6, 7.7, 0.15, 8.3, 6.8, 8.2, 32, 20.1, 12.2, 0.15,
  0.05, 0.4, 3.8, 1.3, 0.05, 0.15, 0.6,
];

const rainPath = () => {
  let d = `M${X0} ${RAIN_Y0}`;
  rainfall.forEach((v, i) => {
    const y = RAIN_Y0 + v * RAIN_UNIT;
    d += ` L${X0 + i * DAY} ${y} L${X0 + (i + 1) * DAY} ${y}`;
  });
  const end = X0 + rainfall.length * DAY;
  d += ` L${end} ${RAIN_Y0 + 2.7 * RAIN_UNIT} L${end} ${RAIN_Y0} Z`;
  return d;
};

const upperShape: [number, number][] = [
  [0, 0.36], [2, 0.36], [4, 0.4], [6, 0.9], [8, 1.6], [10, 2.6], [11, 2.85], [13, 2.45], [15, 1.5], [17, 0.9], [19, 0.6], [21, 0.4], [23, 0.36],
];
const lowerShape: [number, number][] = [
  [0, 0.03], [2, 0.02], [4, 0.05], [6, 0.3], [8, 0.7], [10, 1.1], [11, 1.25], [13, 1.1], [15, 0.8], [17, 0.45], [19, 0.25], [21, 0.1], [23, 0.05],
];

const dailySeries = (shape: [number, number][]) => {
  const out: [number, number][] = [];
  for (let d = 0; d < 31; d++) {
    shape.forEach(([h, v]) => out.push([X0 + (d + h / 24) * DAY, Y0 - v * UNIT]));
  }
  return out;
};

const upper = dailySeries(upperShape);
const lower = dailySeries(lowerShape);
const pointsOf = (pts: [number, number][]) => pts.map((p) => p.join(",")).join(" ");

const flowRaw =
  "92,.72 100,.72 108,2 116,1.35 124,.55 131,1.3 140,.35 146,.75 153,.92 160,.5 168,.13 176,.12 184,.2 190,.3 197,.6 204,.8 212,1.05 220,0 226,1.9 232,1.4 236,1.1 240,1.85 248,1.75 256,.5 264,.1 272,.07 278,.55 286,2.75 293,2.55 300,.4 308,.27 315,.22 322,1.25 330,2.05 338,2.3 345,.35 352,.05 360,.2 367,.9 375,1.9 382,1.6 390,.35 398,.02 404,.85 411,2.3 418,2.33 425,1.6 432,.4 440,.1 447,.02 454,.25 462,.42 470,.35 483,.05 495,.05 505,.3 514,.5 521,.2 528,.22 536,.2 543,.7 550,2.2 558,1.5 565,.55 572,.7 580,.6 587,.9 594,2.5 602,2.3 610,.55 618,.25 625,.1 632,.7 640,2.4 646,1.2 654,.45 662,.2 670,.4 676,.8 683,2.3 690,1.65 698,.5 704,1.2 712,1.6 720,1.87 728,1.7 736,1.48 744,.6 752,.05 760,.05 766,.08 772,.58 780,.45 786,.1 793,.1 800,.15 807,.05 815,.25 822,.55 829,1.75 836,.65 843,.4 850,.1 852,1 859,2.5 866,2.2 873,.55 880,.15 888,0 896,.8 903,1.75 911,2.1 918,2.8 925,.8 932,.7 940,2.7 947,5.9 954,3.65 961,1.1 968,.4 977,1 984,4.65 992,2.6 1000,1.55 1006,.4 1013,.2 1020,.4 1027,2.5 1035,2.75 1042,1.45 1050,.5 1057,.15 1064,.1 1072,.3 1079,.6 1086,.35 1094,.35 1100,.15 1108,.25 1115,.1 1123,.35 1130,.3 1138,.2 1145,.07 1152,.1 1160,.9 1167,2.2 1175,1.7 1182,.5 1190,.2 1197,.65 1204,.8 1212,1.95 1219,1.4 1226,.35 1234,.6 1241,.05 1248,1.2 1255,2.45 1263,1.65 1270,.35 1278,.07 1285,.3 1292,.9 1300,2.05 1307,1.85 1315,.35 1322,.15 1330,.45 1337,.6 1345,2 1352,1.35 1360,.65 1367,.25 1374,.1 1382,.4 1389,.95 1397,1.45 1404,.3 1411,.8 1419,.45 1426,.25 1433,.38 1440,.4 1448,.15 1455,.55";

const flow = flowRaw
  .split(" ")
  .map((p) => {
    const [zx, v] = p.split(",").map(Number);
    return [885 + zx / 1.936, Y0 - v * UNIT] as [number, number];
  });

const chartLegend = [
  { x: 909, w: 42, fill: "#6475d3", stroke: "#4a5fd0", label: "Total flow" },
  { x: 1016, w: 42, fill: "#dca856", stroke: "#d99a3a", label: "Min. flow" },
  { x: 1120, w: 42, fill: "#b05f94", stroke: "#a4357c", label: "Perm. Waste Water vol." },
  { x: 1301, w: 42, fill: "#bcbcbc", stroke: "#c6c6c6", label: "Upper variation" },
  { x: 1440, w: 42, fill: "#bcbcbc", stroke: "#c6c6c6", label: "Lower variation" },
  { x: 1579, w: 41, fill: "#b3bdf8", stroke: "#aab6f8", label: "Rainfall" },
];

const rightTicks = [0, 5, 10, 15, 20, 25, 30, 35, 40, 45, 48];
const leftTicks = [0, 1, 2, 3, 4, 5, 6];
const dayLabels = Array.from({ length: 32 }, (_, i) => (i < 31 ? `${i + 1}/10` : "1/11"));

const TimeChart = () => {
  const band = pointsOf([...upper, ...[...lower].reverse()]);
  return (
    <ChartSvg viewBox="887 326 800 294">
      {chartLegend.map((l) => (
        <g key={l.label}>
          <rect x={l.x} y={330} width={l.w} height={13} fill={l.fill} stroke={l.stroke} strokeWidth={2} />
          <text x={l.x + l.w + 5} y={340.5} fontSize={12} fill="#666">
            {l.label}
          </text>
        </g>
      ))}
      {rightTicks.map((t) => {
        const y = RAIN_Y0 + t * RAIN_UNIT;
        return (
          <g key={t}>
            <line x1={X0} x2={1642} y1={y} y2={y} stroke="#e2e2e2" strokeWidth={1} />
            <text x={1648} y={y + 3.5} fontSize={13} fill="#666">
              {t}
            </text>
          </g>
        );
      })}
      {leftTicks.map((t) => {
        const y = Y0 - t * UNIT;
        return (
          <g key={t}>
            <line x1={926} x2={1637} y1={y} y2={y} stroke="#dedede" strokeWidth={1} />
            <text x={920} y={y + 4} fontSize={13.5} fill="#666" textAnchor="end">
              {t}
            </text>
          </g>
        );
      })}
      <path d={rainPath()} fill="rgba(146,160,248,0.68)" stroke="#aab6f8" strokeWidth={2} />
      <polygon points={band} fill="rgba(200,200,200,0.32)" />
      <polyline points={pointsOf(upper)} fill="none" stroke="#c2c2c2" strokeWidth={2.4} strokeLinejoin="round" />
      <polyline points={pointsOf(lower)} fill="none" stroke="#c2c2c2" strokeWidth={2.4} strokeLinejoin="round" />
      <line x1={X0 + 1} x2={1637} y1={Y0 - 0.5} y2={Y0 - 0.5} stroke="#a4357c" strokeWidth={1.2} />
      <polyline points={`${X0 + 2},${Y0 - 3.4} 1100,${Y0 - 2} 1300,${Y0 - 2} 1637,${Y0 - 3.4}`} fill="none" stroke="#d98a26" strokeWidth={4} />
      <polyline points={pointsOf(flow)} fill="none" stroke="#4a5fd0" strokeWidth={2.2} strokeLinejoin="round" />
      {dayLabels.map((t, i) => (
        <text
          key={i}
          transform={`translate(${X0 + i * DAY + 1} 591) rotate(-45)`}
          fontSize={12}
          fill="#666"
          textAnchor="end"
        >
          {t}
        </text>
      ))}
      <text transform="translate(902 463) rotate(-90)" fontSize={13} fill="#666" textAnchor="middle">
        m³
      </text>
      <text transform="translate(1671 463) rotate(90)" fontSize={13} fill="#666" textAnchor="middle">
        Rainfall (mm)
      </text>
    </ChartSvg>
  );
};

/* ---------- pie ---------- */

const slices: [number, string][] = [
  [9.4, "#1cb800"],
  [19.4, "#1aa800"],
  [33, "#148f00"],
  [45, "#73ad17"],
  [77, "#e9dc00"],
  [90, "#fdb613"],
  [125.4, "#fd8a13"],
  [149.6, "#e82c00"],
  [180, "#c60000"],
  [360, "#a00000"],
];

const arc = (cx: number, cy: number, r: number, from: number, to: number) => {
  const a = ((from - 90) * Math.PI) / 180;
  const b = ((to - 90) * Math.PI) / 180;
  const large = to - from > 180 ? 1 : 0;
  return `M${cx} ${cy} L${cx + r * Math.cos(a)} ${cy + r * Math.sin(a)} A${r} ${r} 0 ${large} 1 ${cx + r * Math.cos(b)} ${cy + r * Math.sin(b)} Z`;
};

const Pie = () => (
  <PieSvg viewBox="0 0 300 206">
    {slices.map(([end, color], i) => (
      <path key={i} d={arc(150, 103, 103, i ? slices[i - 1][0] : 0, end)} fill={color} stroke="#fff" strokeWidth={1.4} />
    ))}
  </PieSvg>
);

/* ---------- small icons ---------- */

const HomeIcon = () => (
  <svg width="28" height="27" viewBox="0 0 28 27" fill="none" stroke={BLUE} strokeWidth="1.5">
    <path d="M1 11 14 1l13 10v15H1z" strokeLinejoin="round" />
  </svg>
);

const CalendarAlert = () => (
  <svg width="26" height="28" viewBox="0 0 26 28" fill="none" stroke={BLUE} strokeWidth="1.6">
    <rect x="1.5" y="4" width="23" height="22" rx="2.5" />
    <path d="M1.5 10h23M7 1v4M19 1v4" />
    <path d="M13 14v6M13 22.5v1.5" strokeWidth="2" />
  </svg>
);

const MoneyIcon = () => (
  <svg width="28" height="20" viewBox="0 0 28 20" fill="none" stroke="currentColor" strokeWidth="1.2">
    <rect x="4" y="1" width="23" height="14" rx="2" />
    <circle cx="15.5" cy="8" r="3" />
    <path d="M4 5h3l1-4M27 5h-3l-1-4M4 11h3l1 4M27 11h-3l-1 4" />
    <path d="M1 4v12a3 3 0 0 0 3 3h19" />
  </svg>
);

const JarIcon = () => (
  <svg width="16" height="20" viewBox="0 0 16 20" fill="none" stroke="currentColor" strokeWidth="1.2">
    <rect x="1" y="1" width="14" height="4" rx="1" />
    <path d="M2 5v13a1 1 0 0 0 1 1h10a1 1 0 0 0 1-1V5" />
    <path d="M2 9h4M2 12.5h4M2 16h4" />
  </svg>
);

const PlantDocIcon = () => (
  <svg width="28" height="21" viewBox="0 0 28 21" fill="none" stroke="currentColor" strokeWidth="1.2">
    <path d="M1 14.5h13M1.5 14.5V10H6V1h7v9M13 10v5" />
    <rect x="16" y="6" width="11" height="14" rx="4" />
    <path d="M19 11h5M19 14h5M19 17h5" />
  </svg>
);

const ListIcon = () => (
  <svg width="18" height="16" viewBox="0 0 18 16" fill={BLUE}>
    <circle cx="2" cy="2" r="2" />
    <circle cx="2" cy="8" r="1.6" fill="none" stroke={BLUE} />
    <circle cx="2" cy="14" r="1.6" fill="none" stroke={BLUE} />
    <rect x="5" y="1" width="13" height="2" />
    <rect x="5" y="7" width="13" height="2" />
    <rect x="5" y="13" width="13" height="2" />
  </svg>
);

const ExpandIcon = () => (
  <svg width="16" height="16" viewBox="0 0 16 16" fill="none" stroke="#fff" strokeWidth="1.1">
    <path d="M1 7V2a1 1 0 0 1 1-1h12a1 1 0 0 1 1 1v12a1 1 0 0 1-1 1H8" />
    <rect x="1" y="10.5" width="4.5" height="4.5" rx="0.6" />
    <path d="M8 8l4-4M9 4h3v3" />
  </svg>
);

const CsvIcon = () => (
  <svg width="19" height="20" viewBox="0 0 19 20">
    <path d="M1 0h8l5 5v7H1z M1 12v7h2v-7z" fill={BLUE} />
    <path d="M9.5 0v4.5H14" fill="none" stroke="#fff" strokeWidth="1" />
    <text x="4" y="19.5" fontSize="7.5" fontFamily="Roboto" fontWeight="500" fill={BLUE}>
      CSV
    </text>
  </svg>
);

const MapSearchIcon = () => (
  <svg width="28" height="28" viewBox="0 0 28 28" fill="none" stroke="#fff" strokeWidth="1.4">
    <circle cx="12" cy="12" r="10.5" />
    <path d="M20 20l7 7" />
    <path d="M12 18s-4.6-4.4-4.6-7.6a4.6 4.6 0 0 1 9.2 0C16.6 13.6 12 18 12 18z" fill="#fff" stroke="none" />
    <circle cx="12" cy="10.4" r="1.6" fill="#6376d8" stroke="none" />
  </svg>
);

const indexRows: [string, string][] = [
  ["Index 91 - 100", "#b84a4d"],
  ["Index 81 - 90", "#da4547"],
  ["Index 71 - 80", "#f06c4a"],
  ["Index 61 - 70", "#fba04e"],
  ["Index 51 - 60", "#fdc452"],
  ["Index 41 - 50", "#f2e53f"],
  ["Index 31 - 40", "#9dc654"],
  ["Index 21 - 30", "#5cb34e"],
  ["Index 11 - 20", "#58bd46"],
  ["Index 0 - 10", "#4cc23e"],
  ["Invalid", "#55566a"],
];

const App = () => {
  return (
    <Root>
      <GlobalStyle />
      <Header>
        <Logo viewBox="0 0 40 22">
          <path d="M1 0v22M7 0l11 11L7 22M32 0 22 11l10 11M38 0v22" />
        </Logo>
        <NetworkSelect>
          <svg width="12" height="14" viewBox="0 0 12 14" fill="none" stroke="#fff" strokeWidth="1.4" strokeDasharray="3 1.6">
            <rect x="1" y="1" width="10" height="12" rx="2" />
          </svg>
          <SelectLabel>Entire network</SelectLabel>
          <ChevronDown size={17} />
        </NetworkSelect>
        <HeaderIcons>
          <HeaderIcon>
            <svg width="20" height="22" viewBox="0 0 20 22" fill="none" stroke={BLUE} strokeWidth="2" strokeLinejoin="round">
              <path d="M1.5 2h17L12 10.5 12.5 20 8 14.5V10.500z" />
            </svg>
          </HeaderIcon>
          <HeaderIcon>
            <svg width="23" height="26" viewBox="0 0 23 26" fill="none" stroke={BLUE} strokeWidth="2">
              <path d="M1 20V3a2 2 0 0 1 2-2h12" />
              <rect x="6" y="6" width="16" height="19" rx="2" />
            </svg>
          </HeaderIcon>
          <HeaderIcon>
            <CircleHelp size={24} strokeWidth={1.9} />
          </HeaderIcon>
          <HeaderIcon>
            <Globe size={24} strokeWidth={1.9} />
          </HeaderIcon>
          <UserIcon viewBox="0 0 34 34">
            <circle cx="17" cy="17" r="17" fill={BLUE} />
            <circle cx="17" cy="12.5" r="6" fill="none" stroke="#fff" strokeWidth="2.4" />
            <path d="M7 25.500c1.500-4 6-6 10-6s8.500 2 10 6c-2.500 3-6 4.500-10 4.500s-7.500-1.500-10-4.500z" fill="none" stroke="#fff" strokeWidth="2.2" />
          </UserIcon>
          <UserName>APX10 - JLL</UserName>
        </HeaderIcons>
      </Header>

      <Body>
        <Sidebar>
          <NavItem>
            <HomeIcon />
          </NavItem>
          <NavItem>
            <TriangleAlert size={32} strokeWidth={1.2} />
          </NavItem>
          <NavItem>
            <CalendarAlert />
          </NavItem>
          <NavItem $active>|&amp;|</NavItem>
          <Version>
            Version:
            <br />
            2.0.10933
          </Version>
        </Sidebar>

        <Panel>
          <TitleRow>
            Inflow &amp; Infiltration
            <CloseBtn>
              <X size={18} strokeWidth={1.3} />
            </CloseBtn>
          </TitleRow>
          <PanelTabs>
            <PanelTab>
              <MoneyIcon />
            </PanelTab>
            <PanelTab>
              <JarIcon />
            </PanelTab>
            <PanelTab $active>
              <PlantDocIcon />
            </PanelTab>
            <PanelTab>
              <Settings size={20} strokeWidth={1.2} />
            </PanelTab>
          </PanelTabs>

          <SectionHead $mt={13} $tight>
            <HeadText>Individuel sensors</HeadText>
            <InfoIcon />
          </SectionHead>
          <Paragraph>
            Visualization of individual sensors in the given timeframe. Click on sensor for more information.
          </Paragraph>

          <SectionHead $mt={18}>
            <HeadText>Period</HeadText>
            <InfoIcon />
          </SectionHead>
          <SelectRow>
            Select period
            <SelectValue>Months</SelectValue>
            <SelectChevron strokeWidth={1.4} />
          </SelectRow>
          <DateField>
            10/2021 - 10/2021
            <Calendar size={14} color={BLUE} strokeWidth={1.6} />
          </DateField>

          <SectionHead $mt={14} $dark>
            <HeadText>Inflow &amp; Infiltration</HeadText>
            <HeadChevron strokeWidth={1.4} />
            <RaisedInfoIcon />
          </SectionHead>
          <Paragraph $rule>Visualization of the estimated volume of inflow &amp; infiltration.</Paragraph>

          <SectionHead $mt={11} $small>
            <HeadText>Total in period</HeadText>
          </SectionHead>
          <StatRow>
            <span>Treatment plant</span>
            <span>452 K m³</span>
          </StatRow>
          <StatRow>
            <span>Pump</span>
            <span>198 K m³</span>
          </StatRow>
          <StatRow>
            <span>Total</span>
            <span>650 K m³</span>
          </StatRow>
          <ListRow>
            <ListIcon />
          </ListRow>
          <Pie />
          <SelectedRow>
            <span>Selected</span>
            <span>650 K m³ (100%)</span>
          </SelectedRow>

          <SectionHead $mt={12} $tight>
            <HeadText>Share of inflow and infiltration</HeadText>
            <InfoIcon />
          </SectionHead>
          <ShareRow>
            <span>Short-term</span>
            <ShareTrack>
              <ShareFill $color="#6478e5" style={{ width: "81%" }} />
            </ShareTrack>
            <SharePct>81%</SharePct>
          </ShareRow>
          <ShareRow>
            <span>Long-term</span>
            <ShareTrack>
              <ShareFill $color="#f9a01e" style={{ width: "19%" }} />
            </ShareTrack>
            <SharePct>19%</SharePct>
          </ShareRow>
        </Panel>

        <MapArea>
          <MapCanvas />

          <MapTools>
            <MapBtn>
              <MapIcon size={32} strokeWidth={1.2} />
            </MapBtn>
            <MapBtn>
              <MapSearchIcon />
            </MapBtn>
            <ZoomCol>
              <ZoomBtn>
                <Plus size={12} strokeWidth={3} />
              </ZoomBtn>
              <ZoomBtn>
                <Minus size={12} strokeWidth={3} />
              </ZoomBtn>
            </ZoomCol>
          </MapTools>

          <Slider>
            <SliderKnob />
          </Slider>

          <Popup>
            <PopupHead>
              <PopupTitle>P455</PopupTitle>
              <CircleChevronLeft size={17} strokeWidth={1.2} />
              <ExpandIcon />
              <X size={18} strokeWidth={1.4} />
            </PopupHead>
            <RatingRow>
              <RatingLabel>Rating:</RatingLabel>
              Oct 1, 2021 - Oct 31, 2021
              <RatingDot />
              Index 0 - 10
            </RatingRow>
            <PopupTabs>
              <PopupTab>Information</PopupTab>
              <PopupTab $active>Timeseries</PopupTab>
            </PopupTabs>
            <ChartBar>
              <BarAction>
                <CsvIcon />
                Download
              </BarAction>
              <BarAction>
                <EditLabel>Edit Perm. Waste Water vol.</EditLabel>
                <SquarePen size={18} color={BLUE} strokeWidth={2.4} />
              </BarAction>
            </ChartBar>
            <TimeChart />
          </Popup>

          <Legend>
            <LegendTitle>
              Legend
              <LegendClose>
                <X size={13} strokeWidth={3} />
              </LegendClose>
            </LegendTitle>
            <LegendGroup $mt={4}>Inflow &amp; Infiltration</LegendGroup>
            {indexRows.map(([label, color]) => (
              <IndexRow key={label}>
                <IndexSwatch $color={color} />
                {label}
              </IndexRow>
            ))}
            <LegendGroup $mt={6} $mb={-2}>
              Network
            </LegendGroup>
            <NetRow $h={26}>
              <NetIcon viewBox="0 0 18 18">
                <rect x="4" y="4" width="10" height="10" transform="rotate(45 9 9)" fill="#fff" stroke="#1aa3f5" strokeWidth="1.6" />
                <text x="9" y="12.500" fontSize="9" fontWeight="700" fill="#1aa3f5" textAnchor="middle">
                  T
                </text>
              </NetIcon>
              Treatment plant
            </NetRow>
            <NetRow $h={26}>
              <NetIcon viewBox="0 0 18 18">
                <circle cx="9" cy="9" r="7.500" fill="#fff" stroke="#1aa3f5" strokeWidth="1.6" />
                <text x="9" y="12.500" fontSize="10" fontWeight="700" fill="#1aa3f5" textAnchor="middle">
                  P
                </text>
              </NetIcon>
              Pump
            </NetRow>
            <NetRow $h={26}>
              <NetIcon viewBox="0 0 18 18">
                <circle cx="9" cy="9" r="7.500" fill="#fff" stroke="#1aa3f5" strokeWidth="1.6" />
              </NetIcon>
              Measuring Point
            </NetRow>
            <NetRow $h={25}>
              <PressureLine />
              Pressure
            </NetRow>
            <LegendGroup $mt={4} $mb={-1}>
              System
            </LegendGroup>
            <NetRow $h={23}>
              <SystemSwatch $color="#aab0fb" />
              Network elements
            </NetRow>
            <NetRow $h={23}>
              <SystemSwatch $color="#868686" />
              Owned by Other Authority
            </NetRow>
          </Legend>

          <ScaleBar>
            <ScaleInner>2 km</ScaleInner>
          </ScaleBar>
        </MapArea>
      </Body>
    </Root>
  );
};

export default App;
